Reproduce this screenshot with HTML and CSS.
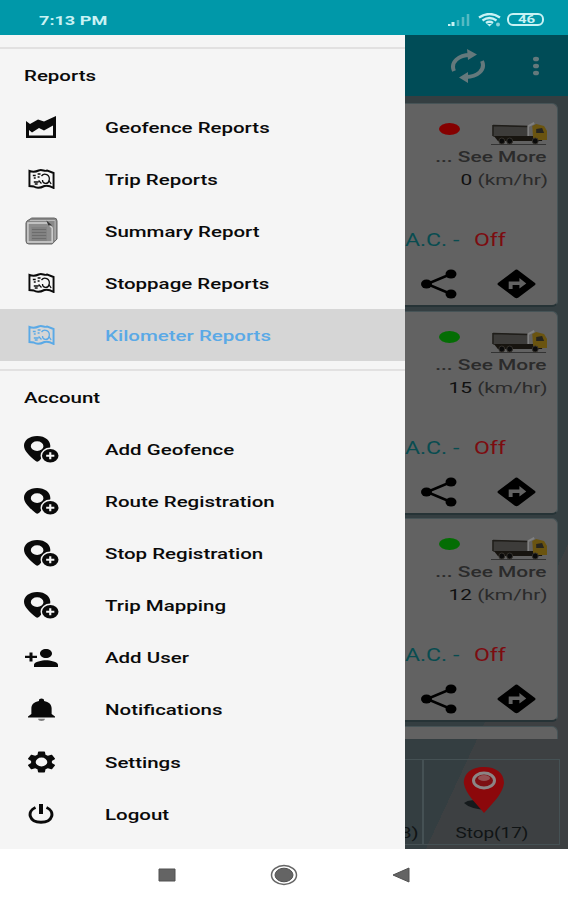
FILE: index.html
```
<!DOCTYPE html>
<html lang="en">
<head>
  <meta charset="UTF-8">
  <title>Vehicle Tracking</title>
  <link rel="stylesheet" href="styles.css">
</head>
<body>

<!-- Shared icons -->
<svg class="sprite" width="0" height="0">
  <symbol id="chart" viewBox="0 0 30 22" preserveAspectRatio="none">
    <path d="M0 5 4 8 12 3.500 18 5.500 30 0V22H0Z M3 14V19.500H27V9.500L18 14.500 13 12 6 16.500Z" fill-rule="evenodd"/>
  </symbol>
  <symbol id="map" viewBox="0 0 28 20" preserveAspectRatio="none">
    <path d="M1.500 2C6 3.500 8 3 11 1.500 15 0 17 3 20 1.500L26.500 4V19C23 17 20 16 17 17 12 19.500 9 19.500 6 17.500L1.500 17Z" fill="none" stroke="currentColor" stroke-width="2"/>
    <path d="M5 6.500H8M10 5H13M6 9H8M10 8H12M6 13H11M11 11.500 14 14.500M14 7C17 3 23 6 22 11S15 15 15 11M22 12 24 15M7 15H10" fill="none" stroke="currentColor" stroke-width="1.300"/>
  </symbol>
  <symbol id="pages" viewBox="0 0 34 28" preserveAspectRatio="none">
    <path d="M2 4 7 1H30Q33 1 33 4V22L28 27H4Q1 27 1 24V6Z" fill="#888" stroke="#666"/>
    <path d="M5 3.500H31V23" fill="none" stroke="#bbb"/>
    <path d="M3 6H23L28 11V25H3Z" fill="#8c8c8c" stroke="#d2d2d2" stroke-width="1.500"/>
    <path d="M7 10H22V24H7Z" fill="#6c6c6c"/>
    <path d="M7 11H22M7 14H22M7 17H22M7 20H22M7 23H22" stroke="#999"/>
    <path d="M22 3.500 28 8.500H24Z" fill="#333"/>
  </symbol>
  <symbol id="pin-add" viewBox="0 0 36 28" preserveAspectRatio="none">
    <path d="M13.500 0C5.500 0 0 4.500 0 10 0 15 5 20 12 26Q14 27.500 16 25.500L27 12C28 5 22 0 13.500 0ZM13.500 5.500A6.500 5 0 1 1 13.500 15.500 6.500 5 0 1 1 13.500 5.500Z" fill-rule="evenodd"/>
    <ellipse cx="27" cy="20.500" rx="10" ry="8.500" fill="#f5f5f5"/>
    <ellipse cx="27" cy="20.500" rx="8.500" ry="7"/>
    <path d="M27 16.800V24.200M22.800 20.500H31.200" stroke="#f5f5f5" stroke-width="2.200"/>
  </symbol>
  <symbol id="user-add" viewBox="1 4 22 16" preserveAspectRatio="none">
    <path d="M15 12c2.210 0 4-1.790 4-4s-1.790-4-4-4-4 1.790-4 4 1.790 4 4 4zm-9-2V7H4v3H1v2h3v3h2v-3h3v-2H6zm9 4c-2.670 0-8 1.340-8 4v2h16v-2c0-2.660-5.330-4-8-4z"/>
  </symbol>
  <symbol id="bell" viewBox="4 2 16 20" preserveAspectRatio="none">
    <path d="M12 22c1.100 0 2-.9 2-2h-4c0 1.100.9 2 2 2z" opacity=".5"/>
    <path d="M18 16v-5c0-3.070-1.640-5.640-4.500-6.320V4c0-.83-.67-1.500-1.500-1.500s-1.500.67-1.500 1.500v.68C7.630 5.360 6 7.920 6 11v5l-2 2v1h16v-1l-2-2z"/>
  </symbol>
  <symbol id="gear" viewBox="2 2 20 20" preserveAspectRatio="none">
    <path d="M19.140 12.940c.04-.3.060-.61.060-.94 0-.32-.02-.64-.07-.94l2.030-1.580c.18-.14.23-.41.120-.61l-1.920-3.320c-.12-.22-.37-.29-.59-.22l-2.390.96c-.5-.38-1.030-.7-1.620-.94l-.36-2.540c-.04-.24-.24-.41-.48-.41h-3.840c-.24 0-.43.170-.47.410l-.36 2.540c-.59.240-1.130.570-1.620.940l-2.390-.96c-.22-.08-.47 0-.59.220L2.740 8.870c-.12.210-.08.470.120.610l2.030 1.580c-.05.300-.09.630-.09.940s.02.640.070.940l-2.030 1.580c-.18.140-.23.410-.12.610l1.920 3.320c.12.220.37.290.59.220l2.390-.96c.5.380 1.030.7 1.620.940l.36 2.540c.05.240.240.410.480.410h3.840c.24 0 .44-.17.470-.41l.36-2.540c.59-.24 1.130-.56 1.620-.94l2.390.96c.22.080.470 0 .59-.22l1.920-3.320c.12-.22.070-.47-.12-.61l-2.010-1.580zM12 16a4 4 0 1 1 0-8 4 4 0 0 1 0 8z"/>
  </symbol>
  <symbol id="power" viewBox="0 0 26 20" preserveAspectRatio="none">
    <path d="M7.500 3.500C-1.500 7.500 1 18.300 13 18.300S27.500 7.500 18.500 3.500" fill="none" stroke="currentColor" stroke-width="3"/>
    <path d="M13 0V10" stroke="currentColor" stroke-width="4"/>
  </symbol>
  <symbol id="share" viewBox="0 0 36 30" preserveAspectRatio="none">
    <path d="M30 5 6 15 30 25" fill="none" stroke="#000" stroke-width="2.500"/>
    <ellipse cx="30" cy="5" rx="5.500" ry="4.500"/><ellipse cx="5.500" cy="15" rx="5.500" ry="4.500"/><ellipse cx="30" cy="25" rx="5.500" ry="4.500"/>
  </symbol>
  <symbol id="turn" viewBox="0 0 40 30" preserveAspectRatio="none">
    <path d="M20 0.500Q21 .5 22 1.500L39 14Q40 15 39 16L22 28.500Q20 30 18 28.500L1 16Q0 15 1 14L18 1.500Q19 .5 20 .5Z"/>
    <path d="M12 20V12.500H23V9L30 14.500 23 19.500V16H16V20Z" fill="#626262"/>
  </symbol>
  <symbol id="truck" viewBox="0 0 58 24" preserveAspectRatio="none">
    <path d="M0 22.500H56" stroke="#333" stroke-width="1"/>
    <path d="M2 3 39 4V14L2 15Z" fill="#3d3c3a"/>
    <path d="M2 3.500 38 4.500M2 3V14" stroke="#1f1d19" stroke-width="1.500"/>
    <path d="M3 14H52V19H7Z" fill="#17140f"/>
    <path d="M42 4 46 2 54 4 57 9V18H43Z" fill="#6a5410"/>
    <path d="M46 7 52 6 54 11H46Z" fill="#26251f"/>
    <path d="M38 14V4L44 1" fill="none" stroke="#808080" stroke-width="2"/>
    <g fill="#0a0a0a" stroke="#35322d"><circle cx="11" cy="19" r="3"/><circle cx="19" cy="19" r="3"/><circle cx="45" cy="19" r="3"/></g>
  </symbol>
</svg>

<div class="screen">

  <!-- Android status bar -->
  <div class="status-bar">
    <span class="clock wide">7:13 PM</span>
    <svg class="signal" width="22" height="12" viewBox="0 0 22 12">
      <path d="M1 12V10M5 12V8" stroke="#c9f2f4" stroke-width="3"/>
      <path d="M10 12V6M15 12V3M20 12V0" stroke="#55bac3" stroke-width="2.500"/>
    </svg>
    <svg class="wifi" width="24" height="14" viewBox="0 0 24 14">
      <path d="M1 4.500Q11.500-2.500 22 4.500M4.500 7.500Q11.500 2.500 18.500 7.500M8 10Q11.500 7.500 15 10" fill="none" stroke="#c9f2f4" stroke-width="2.300"/>
      <path d="M9 11H14L11.500 13.500Z" fill="#c9f2f4"/><circle cx="20" cy="11.500" r="2" fill="#8bd4da"/>
    </svg>
    <div class="battery"><span class="wide">46</span></div>
  </div>

  <div class="stage">

    <!-- Vehicle list, dimmed while the drawer is open -->
    <div class="app">
      <div class="toolbar">
        <svg width="36" height="34" viewBox="0 0 36 34">
          <g fill="none" stroke="#64797c" stroke-width="4">
            <path d="M4 22C0 13 9 6 20 6"/><path d="M32 12C36 21 27 28 16 28"/>
          </g>
          <path d="M17 0 27 5.500 18 11ZM18 23 9 28.500 18 34Z" fill="#64797c"/>
        </svg>
        <svg width="8" height="20" viewBox="0 0 8 20" fill="#64797c">
          <ellipse cx="4" cy="3" rx="3" ry="2.300"/><ellipse cx="4" cy="10" rx="3" ry="2.300"/><ellipse cx="4" cy="17" rx="3" ry="2.300"/>
        </svg>
      </div>

      <div class="vehicles">
        <div class="card">
          <div class="card-top"><i class="dot stopped"></i><svg class="truck"><use href="#truck"/></svg></div>
          <div class="more"><span class="wide-right">... See More</span></div>
          <div class="speed"><span class="wide-right"><b>0</b> (km/hr)</span></div>
          <div class="ac"><span class="wide">A.C. -</span><span class="off wide">Off</span></div>
          <div class="actions"><svg class="share"><use href="#share"/></svg><svg class="turn"><use href="#turn"/></svg></div>
        </div>
        <div class="card">
          <div class="card-top"><i class="dot"></i><svg class="truck"><use href="#truck"/></svg></div>
          <div class="more"><span class="wide-right">... See More</span></div>
          <div class="speed"><span class="wide-right"><b>15</b> (km/hr)</span></div>
          <div class="ac"><span class="wide">A.C. -</span><span class="off wide">Off</span></div>
          <div class="actions"><svg class="share"><use href="#share"/></svg><svg class="turn"><use href="#turn"/></svg></div>
        </div>
        <div class="card">
          <div class="card-top"><i class="dot"></i><svg class="truck"><use href="#truck"/></svg></div>
          <div class="more"><span class="wide-right">... See More</span></div>
          <div class="speed"><span class="wide-right"><b>12</b> (km/hr)</span></div>
          <div class="ac"><span class="wide">A.C. -</span><span class="off wide">Off</span></div>
          <div class="actions"><svg class="share"><use href="#share"/></svg><svg class="turn"><use href="#turn"/></svg></div>
        </div>
        <div class="card"></div>
      </div>

      <div class="tabs">
        <div class="tab previous"><span class="wide-right">8)</span></div>
        <div class="tab">
          <svg class="marker" width="43" height="47" viewBox="0 0 43 47">
            <path d="M1 36Q7 31 18 35L24 43Q7 42 1 36Z" fill="#151a1c"/>
            <path d="M21 0C8 0 0 7 1 17 3 27 12 35 21 46 31 35 40 26 41 16 41 6 33 0 21 0Z" fill="#8c080b"/>
            <ellipse cx="21" cy="13.500" rx="10.500" ry="7.500" fill="#7d1013" stroke="#8b8585" stroke-width="3"/>
            <ellipse cx="21" cy="11" rx="6" ry="3" fill="#945153"/>
          </svg>
          <span class="wide-center">Stop(17)</span>
        </div>
      </div>
    </div>

    <!-- Navigation drawer -->
    <div class="drawer">
      <div class="group">
        <h2><span class="wide">Reports</span></h2>
        <ul>
          <li><svg class="i-chart"><use href="#chart"/></svg><span class="wide">Geofence Reports</span></li>
          <li><svg class="i-map"><use href="#map"/></svg><span class="wide">Trip Reports</span></li>
          <li><svg class="i-pages"><use href="#pages"/></svg><span class="wide">Summary Report</span></li>
          <li><svg class="i-map"><use href="#map"/></svg><span class="wide">Stoppage Reports</span></li>
          <li class="selected"><svg class="i-map"><use href="#map"/></svg><span class="wide">Kilometer Reports</span></li>
        </ul>
      </div>
      <div class="group">
        <h2><span class="wide">Account</span></h2>
        <ul>
          <li><svg class="i-pin"><use href="#pin-add"/></svg><span class="wide">Add Geofence</span></li>
          <li><svg class="i-pin"><use href="#pin-add"/></svg><span class="wide">Route Registration</span></li>
          <li><svg class="i-pin"><use href="#pin-add"/></svg><span class="wide">Stop Registration</span></li>
          <li><svg class="i-pin"><use href="#pin-add"/></svg><span class="wide">Trip Mapping</span></li>
          <li><svg class="i-user"><use href="#user-add"/></svg><span class="wide">Add User</span></li>
          <li><svg class="i-bell"><use href="#bell"/></svg><span class="wide">Notifications</span></li>
          <li><svg class="i-gear"><use href="#gear"/></svg><span class="wide">Settings</span></li>
          <li><svg class="i-power"><use href="#power"/></svg><span class="wide">Logout</span></li>
        </ul>
      </div>
    </div>
  </div>

  <!-- Android buttons -->
  <div class="nav-bar">
    <svg width="18" height="14" viewBox="0 0 18 14"><path d="M1 1H17V13H1Z" fill="#646464" stroke="#505050"/></svg>
    <svg width="28" height="22" viewBox="0 0 28 22">
      <ellipse cx="14" cy="11" rx="12.500" ry="9.500" fill="none" stroke="#666" stroke-width="1.500"/>
      <ellipse cx="14" cy="11" rx="9" ry="6.800" fill="#646464" stroke="#505050"/>
    </svg>
    <svg width="18" height="16" viewBox="0 0 18 16"><path d="M1 8 17 1V15Z" fill="#646464" stroke="#505050"/></svg>
  </div>

</div>

</body>
</html>
```

FILE: styles.css
```
body {
  margin: 0;
  font-family: Roboto, "Liberation Sans", sans-serif;
}

svg {
  display: block;
  flex-shrink: 0;
}

.sprite {
  position: absolute;
}

.screen {
  display: flex;
  flex-direction: column;
  width: 568px;
  height: 900px;
  overflow: hidden;
}

/* Stretched lettering */
.wide,
.wide-right,
.wide-center {
  display: inline-block;
  white-space: nowrap;
  transform: scaleX(1.365);
  transform-origin: left center;
}

.wide-right {
  transform-origin: right center;
}

.wide-center {
  transform: scaleX(1.26);
  transform-origin: center;
}

/* Status bar */
.status-bar {
  display: flex;
  align-items: center;
  height: 35px;
  padding: 4px 24px 0 39px;
  box-sizing: border-box;
  background-color: #0098a9;
  color: #c9f2f4;
}

.clock {
  font-size: 13.5px;
  font-weight: 700;
  margin-right: auto;
  transform: scaleX(1.34);
}

.signal {
  margin-right: 8px;
}

.wifi {
  margin-right: 5px;
}

.battery {
  display: flex;
  align-items: center;
  width: 37px;
  height: 13px;
  box-sizing: border-box;
  padding-left: 9px;
  border: 2px solid #c9f2f4;
  border-radius: 6px;
  font-size: 11px;
  font-weight: 700;
}

/* Drawer and list share one cell */
.stage {
  display: grid;
  height: 814px;
}

.app,
.drawer {
  grid-area: 1 / 1;
}

.app {
  display: flex;
  flex-direction: column;
  background: linear-gradient(115deg, #343e41 0 85%, #3d4042 85%);
}

.toolbar {
  display: flex;
  align-items: center;
  justify-content: flex-end;
  gap: 46px;
  height: 61px;
  padding-right: 28px;
  background-color: #004c57;
}

.vehicles {
  display: flex;
  flex-direction: column;
  gap: 3.7px;
  height: 643px;
  padding: 7px 10px 0;
  box-sizing: border-box;
  overflow: hidden;
}

.card {
  flex-shrink: 0;
  height: 204px;
  box-sizing: border-box;
  padding: 18px 9px 0 0;
  border: 1px solid #465356;
  border-bottom: 2px solid #263336;
  border-radius: 6px;
  background-color: #626262;
}

.card-top {
  display: flex;
  justify-content: flex-end;
  height: 24px;
  gap: 31px;
}

.dot {
  width: 21px;
  height: 12px;
  margin-top: 1px;
  border-radius: 50%;
  background-color: #046d04;
}

.dot.stopped {
  background-color: #850000;
}

.truck {
  width: 57px;
  height: 24px;
}

.more,
.speed {
  height: 23px;
  line-height: 23px;
  text-align: right;
  font-size: 15.3px;
  color: #2b2b2b;
}

.more {
  padding-right: 1px;
  font-weight: 500;
}

.speed b {
  font-weight: 400;
  color: #101010;
}

.ac {
  display: flex;
  gap: 27px;
  height: 24px;
  margin: 36px 0 0 394px;
  line-height: 24px;
  font-size: 18px;
  color: #084c50;
}

.ac .wide {
  transform: scaleX(1.28);
}

.off {
  color: #7c0c10;
}

.actions {
  display: flex;
  justify-content: flex-end;
  gap: 40px;
  padding: 17px 12px 0 0;
}

.share {
  width: 36px;
  height: 30px;
}

.turn {
  width: 39px;
  height: 30px;
}

.tabs {
  display: flex;
  height: 86px;
  margin-top: 20px;
}

.tab {
  display: flex;
  flex-direction: column;
  align-items: center;
  justify-content: space-between;
  width: 137px;
  box-sizing: border-box;
  padding: 7px 0 2px;
  border: 1px solid #455154;
  font-size: 15px;
  color: #101415;
}

.tab.previous {
  width: 423px;
  align-items: flex-end;
  justify-content: flex-end;
  padding-right: 3px;
}

.marker {
  margin-right: 14px;
}

/* Navigation drawer */
.drawer {
  z-index: 1;
  width: 405px;
  padding-top: 12px;
  box-sizing: border-box;
  background-color: #f5f5f5;
  color: #0a0a0a;
}

.group {
  border-top: 2px solid #e2e1e1;
  padding-bottom: 8px;
}

.group h2 {
  margin: 0;
  padding: 2px 0 0 24px;
  line-height: 50px;
  font-size: 15px;
  font-weight: 500;
}

.group ul {
  list-style-type: none;
  margin: 0;
  padding: 0;
}

.group li {
  display: grid;
  grid-template-columns: 82px 1fr;
  align-items: center;
  justify-items: center;
  height: 52.1px;
  font-size: 15px;
  font-weight: 500;
}

.group li .wide {
  justify-self: start;
  margin-left: 23px;
  padding-top: 1px;
}

.group li svg {
  fill: currentColor;
}

.group .selected {
  background-color: #d6d6d6;
  color: #5aa9e6;
}

.i-chart {
  width: 30px;
  height: 22px;
}

.i-map {
  width: 27px;
  height: 20px;
}

.i-pages {
  width: 33px;
  height: 28px;
}

.i-pin {
  width: 35px;
  height: 27px;
}

.i-user {
  width: 33px;
  height: 18px;
}

.i-bell {
  width: 27px;
  height: 23px;
}

.i-gear {
  width: 29px;
  height: 22px;
}

.i-power {
  width: 26px;
  height: 20px;
}

/* Android buttons */
.nav-bar {
  display: flex;
  align-items: center;
  justify-content: center;
  gap: 94px;
  height: 51px;
  background-color: #fff;
}
```
